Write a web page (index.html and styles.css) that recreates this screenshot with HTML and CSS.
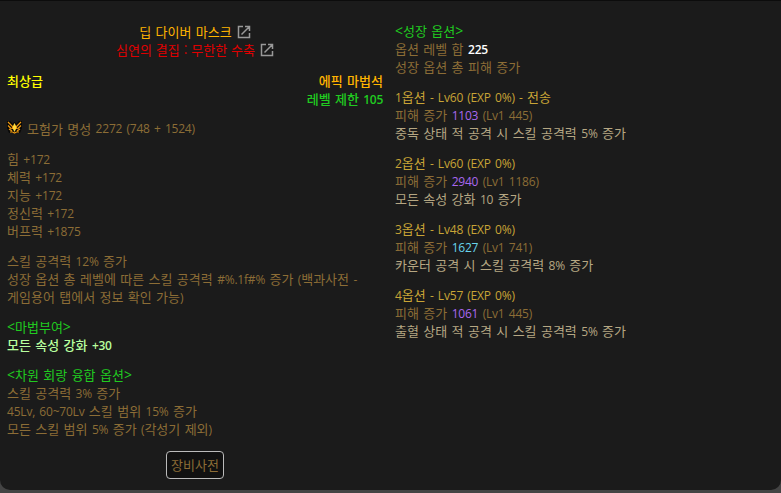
FILE: index.html
```
<!DOCTYPE html>
<html lang="ko">
<head>
<meta charset="utf-8">
<title>딥 다이버 마스크</title>
<link rel="stylesheet" href="styles.css">
</head>
<body>
<main class="panel">
  <section class="left">
    <header class="head">
      <div class="name epic">딥 다이버 마스크 <svg class="ext" viewBox="0 0 14 14"><path d="M6 1.5H1.5v11h11V8M8 1.5h4.5V6M12.5 1.5L4.5 9.5"/></svg></div>
      <div class="name red">심연의 결집 : 무한한 수축 <svg class="ext" viewBox="0 0 14 14"><path d="M6 1.5H1.5v11h11V8M8 1.5h4.5V6M12.5 1.5L4.5 9.5"/></svg></div>
    </header>
    <div class="row"><b class="grade">최상급</b><div class="kind"><div class="epic semi">에픽 마법석</div><div class="green semi">레벨 제한 <span class="n">105</span></div></div></div>
    <div class="fame"><svg class="crest" viewBox="0 0 15 13"><path fill="#080808" d="M0 0h3l3 3 1-2h1l1 2 3-3h3v7l-2 5H9l-1.500 1L6 12H2L0 7z"/><path fill="none" stroke="#f09a10" stroke-width="1.200" d="M1 1l4.500 4.500V8M14 1L9.500 5.500V8M1 4.500L4.500 8M14 4.500L10.500 8M2 8l3 2M13 8l-3 2M3 11h2.500l2 1 2-1H12"/><path fill="#ffd83a" d="M7.500 2L9 5v3l-1.500 3L6 8V5z"/></svg>모험가 명성 <span class="n">2272 (748 + 1524)</span></div>
    <div class="block">
      <div>힘 <span class="n">+172</span></div>
      <div>체력 <span class="n">+172</span></div>
      <div>지능 <span class="n">+172</span></div>
      <div>정신력 <span class="n">+172</span></div>
      <div>버프력 <span class="n">+1875</span></div>
    </div>
    <div class="block">
      <div>스킬 공격력 <span class="n">12%</span> 증가</div>
      <div>성장 옵션 총 레벨에 따른 스킬 공격력 <span class="n">#%.1f#%</span> 증가 <span class="n">(</span>백과사전 <span class="n">-</span></div>
      <div>게임용어 탭에서 정보 확인 가능<span class="n">)</span></div>
    </div>
    <div class="block">
      <div class="green"><span class="a">&lt;</span>마법부여<span class="a">&gt;</span></div>
      <div class="mint">모든 속성 강화 <span class="n">+30</span></div>
    </div>
    <div class="block">
      <div class="green"><span class="a">&lt;</span>차원 회랑 융합 옵션<span class="a">&gt;</span></div>
      <div>스킬 공격력 <span class="n">3%</span> 증가</div>
      <div><span class="n">45Lv, 60~70Lv</span> 스킬 범위 <span class="n">15%</span> 증가</div>
      <div>모든 스킬 범위 <span class="n">5%</span> 증가 <span class="n">(</span>각성기 제외<span class="n">)</span></div>
    </div>
    <button class="dict">장비사전</button>
  </section>
  <section class="right">
    <div class="block">
      <div class="green"><span class="a">&lt;</span>성장 옵션<span class="a">&gt;</span></div>
      <div>옵션 레벨 합 <span class="n white">225</span></div>
      <div>성장 옵션 총 피해 증가</div>
    </div>
    <div class="block">
      <div class="gold"><span class="n">1</span>옵션 <span class="n">- Lv60 (EXP 0%) -</span> 전송</div>
      <div>피해 증가 <span class="n purple">1103</span> <span class="n">(Lv1 445)</span></div>
      <div class="sand">중독 상태 적 공격 시 스킬 공격력 <span class="n">5%</span> 증가</div>
    </div>
    <div class="block">
      <div class="gold"><span class="n">2</span>옵션 <span class="n">- Lv60 (EXP 0%)</span></div>
      <div>피해 증가 <span class="n purple">2940</span> <span class="n">(Lv1 1186)</span></div>
      <div class="sand">모든 속성 강화 <span class="n">10</span> 증가</div>
    </div>
    <div class="block">
      <div class="gold"><span class="n">3</span>옵션 <span class="n">- Lv48 (EXP 0%)</span></div>
      <div>피해 증가 <span class="n cyan">1627</span> <span class="n">(Lv1 741)</span></div>
      <div class="sand">카운터 공격 시 스킬 공격력 <span class="n">8%</span> 증가</div>
    </div>
    <div class="block">
      <div class="gold"><span class="n">4</span>옵션 <span class="n">- Lv57 (EXP 0%)</span></div>
      <div>피해 증가 <span class="n purple">1061</span> <span class="n">(Lv1 445)</span></div>
      <div class="sand">출혈 상태 적 공격 시 스킬 공격력 <span class="n">5%</span> 증가</div>
    </div>
  </section>
</main>
</body>
</html>
```
FILE: styles.css
```
* { box-sizing: border-box; }
body {
  margin: 0;
  height: 493px;
  overflow: hidden;
  background: #444;
  font: 13px/18px "Noto Sans CJK KR", sans-serif;
  color: #8c6d36;
  word-spacing: 0.75px;
  white-space: nowrap;
}
.panel {
  display: flex;
  height: 490px;
  padding: 21px 7px 0;
  background: #1b1b1b;
  border-top: 1px solid #0c0c0c;
  border-radius: 0 0 10px 10px;
}
.left { width: 376px; margin-right: 12px; }
.block { margin-bottom: 12px; }
.block > div, .name, .kind > div, .fame { height: 18px; }
.n {
  font-family: "Open Sans", sans-serif;
  font-size: 12px;
  letter-spacing: -0.2px;
  word-spacing: 1.3px;
}
.a { font-family: "Open Sans", sans-serif; font-size: 14px; }
.head { padding-top: 1px; }
.name { display: flex; justify-content: center; gap: 5px; align-items: center; }
.name.red { word-spacing: 0.3px; }
.ext { width: 14px; height: 14px; fill: none; stroke: #999; stroke-width: 1.5; }
.row { display: flex; justify-content: space-between; margin-top: 13px; }
.kind { text-align: right; }
.grade { color: #ff0; font-weight: 500; }
.semi { font-weight: 500; }
.semi .n, .mint .n { font-weight: 600; letter-spacing: -0.3px; }
.fame { display: flex; margin: 12px 0; white-space: pre; }
.crest { flex: none; width: 15px; height: 13px; margin: 1px 5px 0 0; }
.epic { color: #ffb400; }
.red { color: #e00000; }
.green { color: #20cb20; }
.mint { color: #b8ff9e; font-weight: 500; }
.gold { color: #c8a436; }
.sand { color: #b6a783; }
.white { color: #fff; font-weight: 600; }
.purple { color: #a968ee; font-weight: 500; }
.cyan { color: #68d5ed; font-weight: 500; }
.dict {
  display: block;
  width: 58px;
  height: 28px;
  margin: 13px auto 0;
  padding: 0;
  border: 1px solid #bbb;
  border-radius: 4px;
  background: #111;
  color: inherit;
  font: inherit;
}
```
